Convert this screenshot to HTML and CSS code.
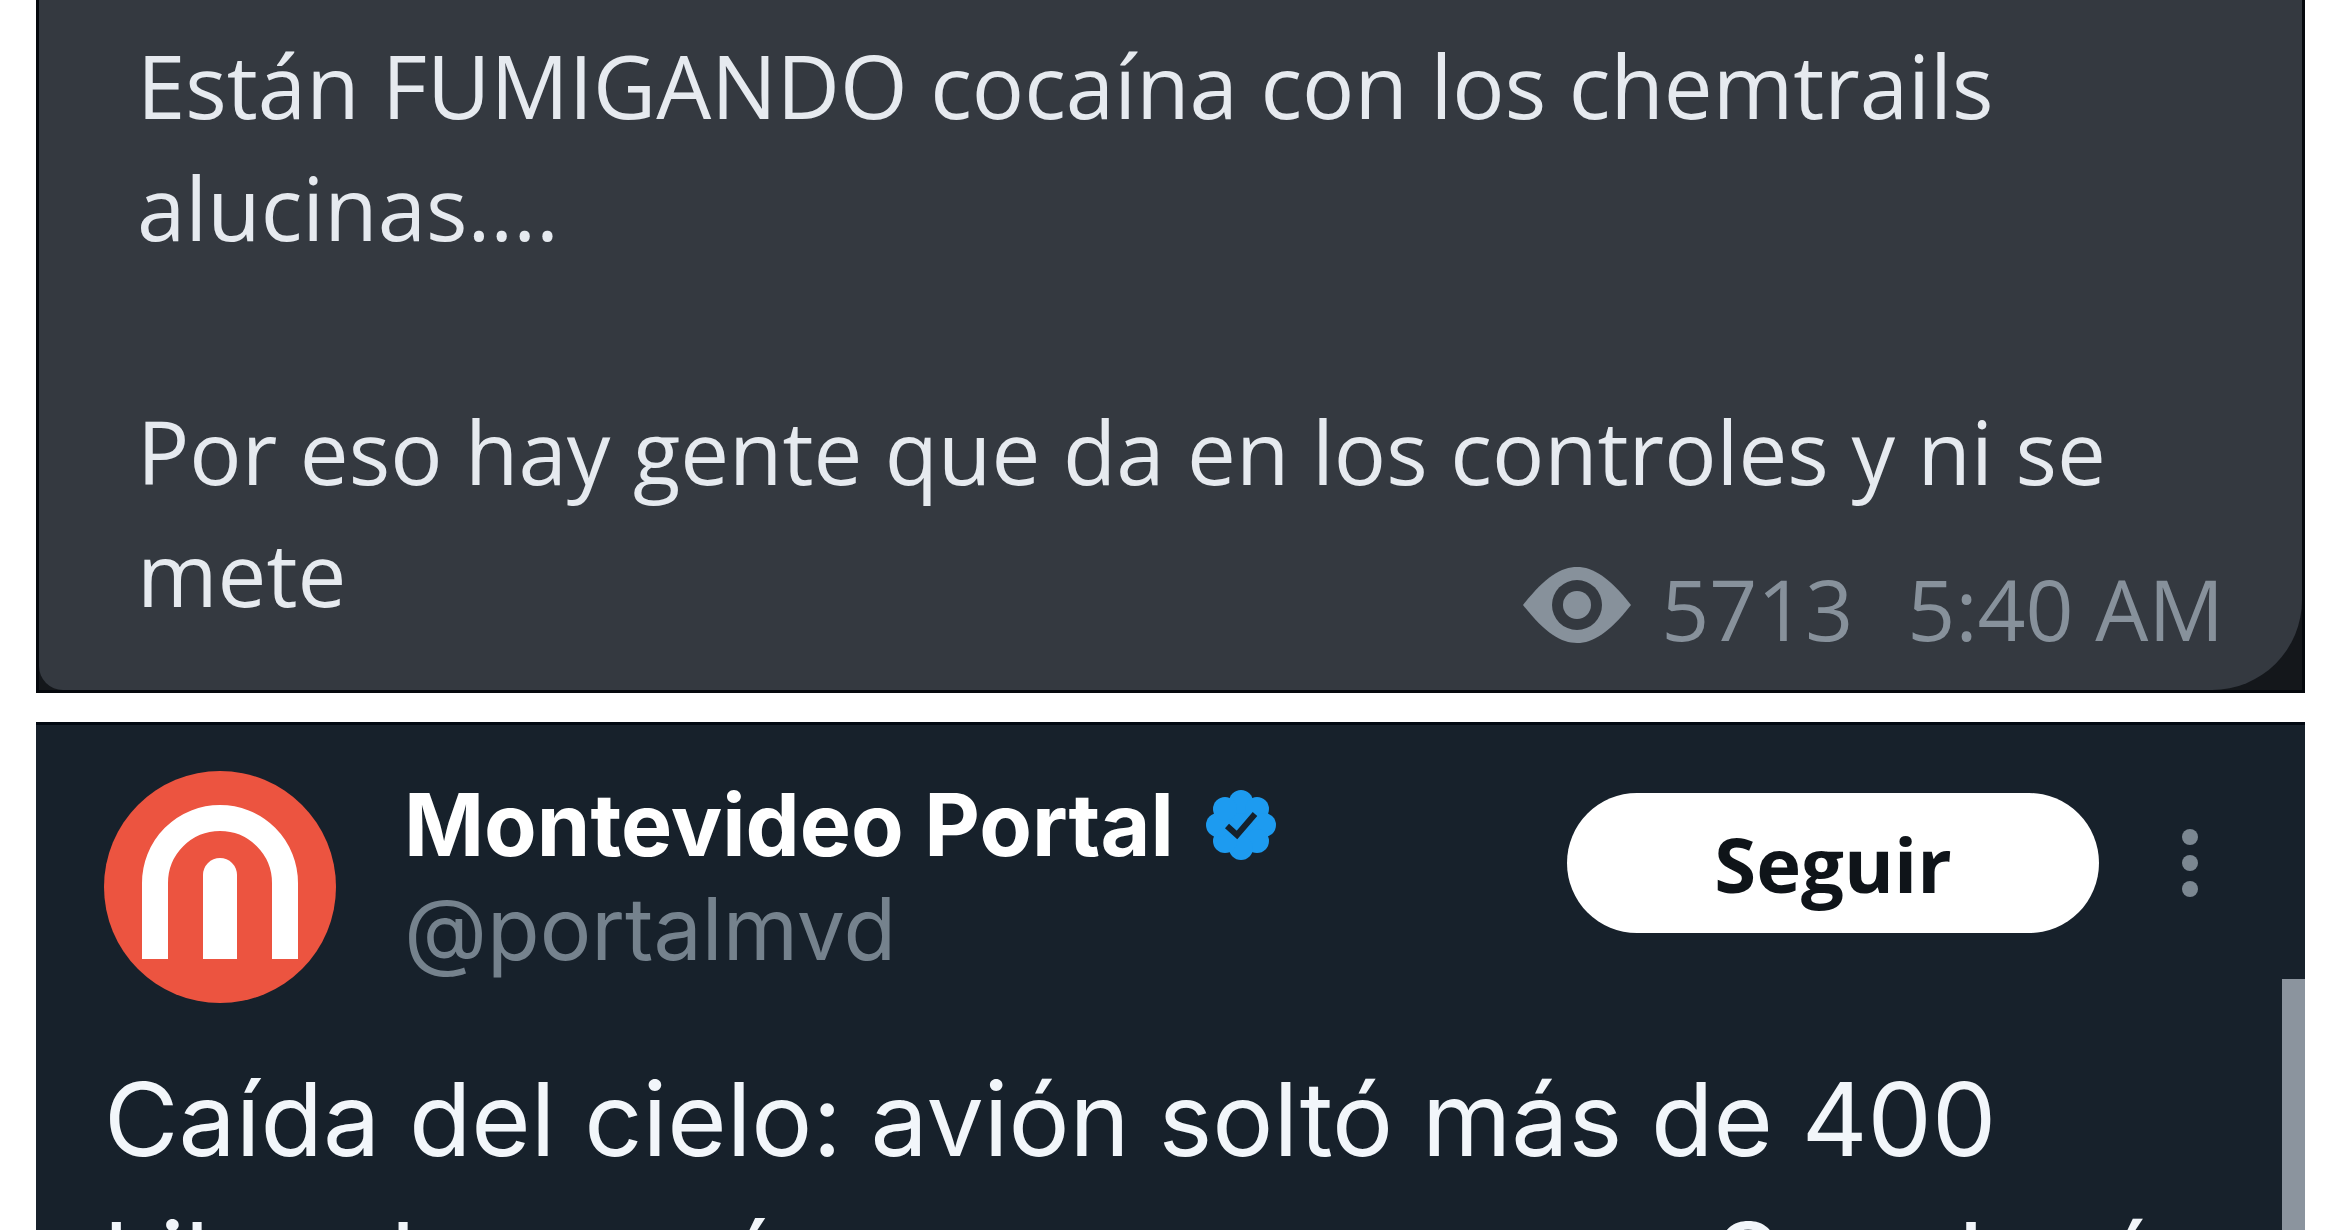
FILE: index.html
```html
<!DOCTYPE html>
<html lang="es">
<head>
    <meta charset="UTF-8">
    <meta name="viewport" content="width=device-width, initial-scale=1.0">
    <title>Montevideo Portal</title>
    <link rel="stylesheet" href="styles.css">
</head>
<body>
    <main class="page">
        <section class="message">
            <div class="bubble">
                <p>Están FUMIGANDO cocaína con los chemtrails<br>alucinas....</p>
                <p>Por eso hay gente que da en los controles y ni se<br>mete</p>
                <div class="meta">
                    <svg class="eye" viewBox="0 0 108 76" aria-hidden="true">
                        <path d="M0 38C22 10 38 0 54 0s32 10 54 38C86 66 70 76 54 76S22 66 0 38z" fill="#87919b"/>
                        <circle cx="54" cy="38" r="25" fill="#343940"/>
                        <circle cx="54" cy="38" r="14" fill="#87919b"/>
                    </svg>
                    <span class="views">5713</span>
                    <time>5:40 AM</time>
                </div>
            </div>
        </section>

        <section class="tweet">
            <header class="tweet-header">
                <svg class="avatar" viewBox="0 0 232 232" aria-hidden="true">
                    <circle cx="116" cy="116" r="116" fill="#ec5440"/>
                    <path d="M51 188V112a65 65 0 0 1 130 0v76" fill="none" stroke="#fff" stroke-width="26"/>
                    <path d="M99 188v-84a17 17 0 0 1 34 0v84z" fill="#fff"/>
                </svg>
                <div class="author">
                    <div class="name">Montevideo Portal
                        <svg class="badge" viewBox="0 0 70 70" aria-hidden="true">
                            <g fill="#1d9bf0">
                                <circle cx="35" cy="35" r="28"/>
                                <circle cx="35" cy="12" r="12"/>
                                <circle cx="51" cy="19" r="12"/>
                                <circle cx="58" cy="35" r="12"/>
                                <circle cx="51" cy="51" r="12"/>
                                <circle cx="35" cy="58" r="12"/>
                                <circle cx="19" cy="51" r="12"/>
                                <circle cx="12" cy="35" r="12"/>
                                <circle cx="19" cy="19" r="12"/>
                            </g>
                            <path d="M21 36l10 9 18-21" fill="none" stroke="#15202b" stroke-width="6"/>
                        </svg>
                    </div>
                    <div class="handle">@portalmvd</div>
                </div>
                <button class="follow" type="button">Seguir</button>
                <button class="more" type="button" aria-label="Más opciones">
                    <svg viewBox="0 0 18 70" aria-hidden="true">
                        <circle cx="9" cy="9" r="8"/>
                        <circle cx="9" cy="35" r="8"/>
                        <circle cx="9" cy="61" r="8"/>
                    </svg>
                </button>
            </header>
            <p class="tweet-text">Caída del cielo: avión soltó más de 400<br>kilos de cocaína en un campo en San José</p>
            <div class="scrollbar"></div>
        </section>
    </main>
</body>
</html>
```

FILE: styles.css
```css
* {
    box-sizing: border-box;
}
body {
    margin: 0;
    background-color: #fff;
}
.page {
    height: 100vh;
    padding: 0 45px 0 36px;
    display: flex;
    flex-direction: column;
    gap: 29px;
    overflow: hidden;
}
.message {
    background-color: #14171b;
    border: 3px solid #05080d;
    border-top: 0;
    flex: none;
}
.bubble {
    background-color: #343940;
    border-radius: 0 0 90px 24px;
    padding: 24px 80px 56px 98px;
    font-family: "Open Sans", sans-serif;
    font-size: 87px;
    line-height: 122px;
    color: #e6eaef;
    position: relative;
}
.bubble p {
    margin: 0 0 122px;
    white-space: nowrap;
}
.bubble p:nth-of-type(2) {
    margin: 0;
}
.meta {
    position: absolute;
    right: 78px;
    bottom: 20px;
    display: flex;
    align-items: center;
    font-size: 84px;
    color: #87919b;
}
.eye {
    width: 108px;
    height: 76px;
    margin: 0 30px 8px 0;
}
.views {
    margin-right: 54px;
}
.tweet {
    flex: 1 0 0;
    min-height: 0;
    background-color: #17212b;
    border-top: 3px solid #020912;
    padding: 46px 68px 0;
    font-family: Inter, sans-serif;
    position: relative;
}
.tweet-header {
    display: flex;
}
.avatar {
    width: 232px;
    height: 232px;
    margin-right: 68px;
}
.author {
    flex: 1;
}
.name {
    display: flex;
    align-items: center;
    gap: 32px;
    font-size: 86px;
    font-weight: 700;
    line-height: 108px;
    color: #fff;
}
.badge {
    width: 70px;
    height: 70px;
}
.handle {
    font-size: 86px;
    line-height: 100px;
    color: #75828d;
}
.follow {
    width: 532px;
    height: 140px;
    margin: 22px 82px 0 0;
    border: 0;
    border-radius: 70px;
    background-color: #fff;
    color: #0f1419;
    font-family: "Open Sans", sans-serif;
    font-size: 76px;
    font-weight: 700;
}
.more {
    height: 140px;
    margin: 22px 38px 0 0;
    padding: 0;
    border: 0;
    background: none;
}
.more svg {
    display: block;
    width: 18px;
    height: 70px;
    fill: #7b8791;
}
.tweet-text {
    margin: 46px 0 0;
    font-size: 102px;
    line-height: 140px;
    color: #f2f6fa;
    white-space: nowrap;
}
.scrollbar {
    position: absolute;
    top: 254px;
    right: 0;
    bottom: 0;
    width: 23px;
    background-color: #8b949e;
}
```
